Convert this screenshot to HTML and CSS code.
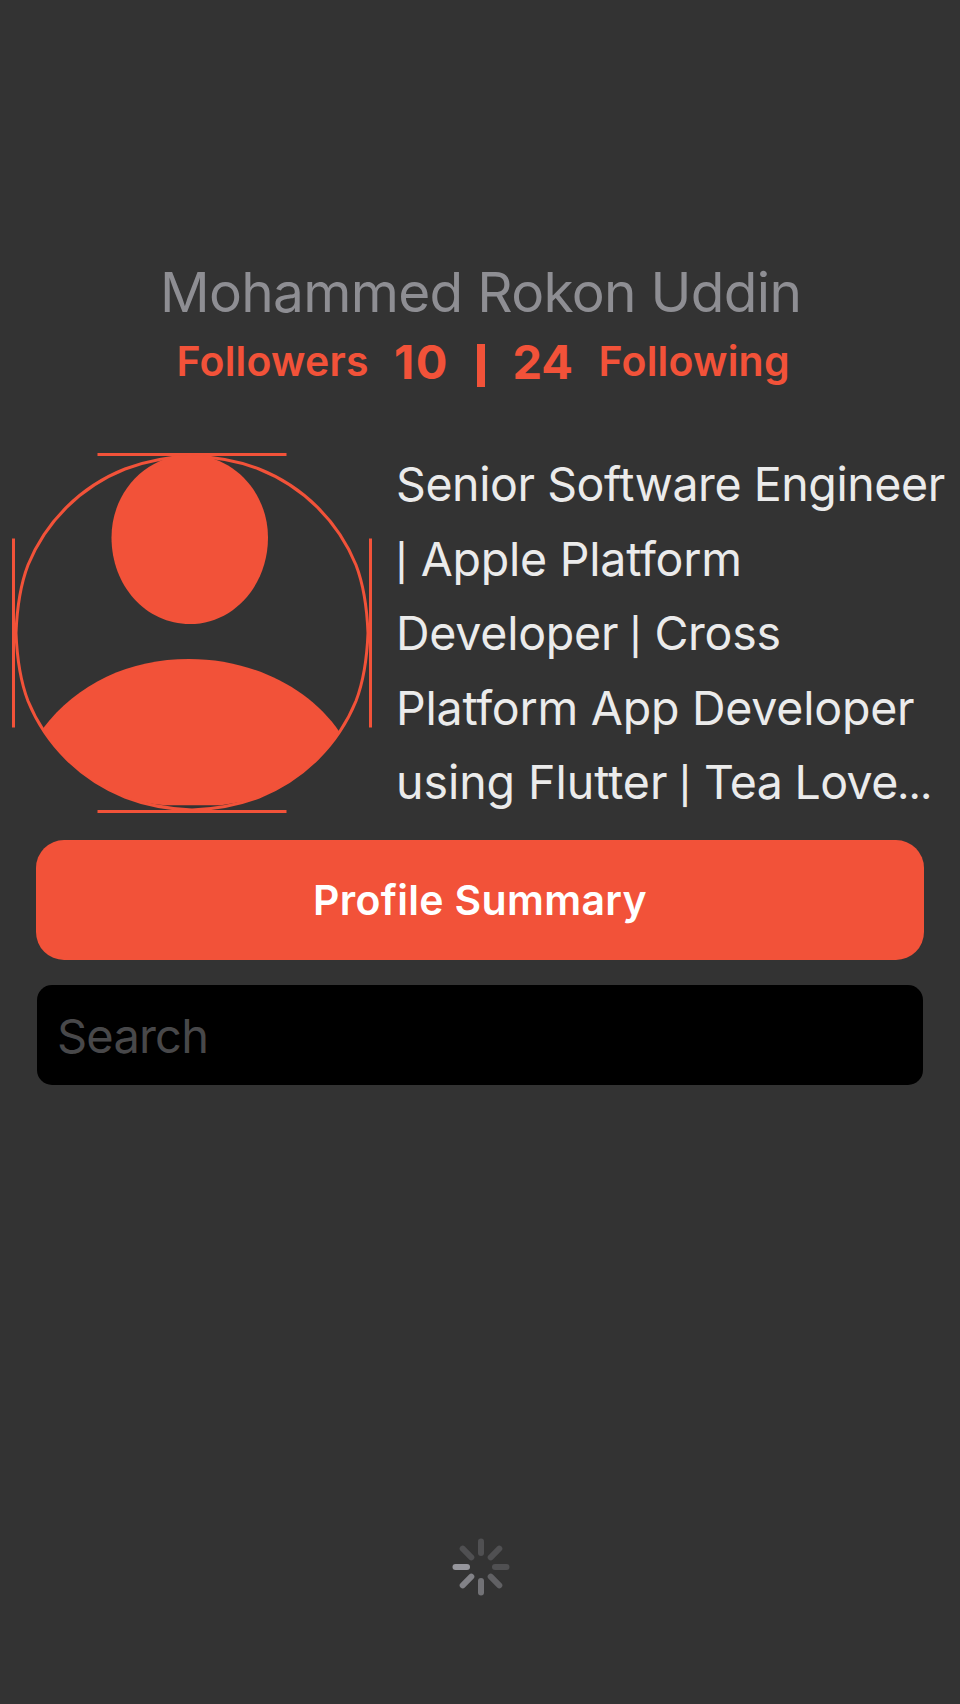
FILE: index.html
```html
<!DOCTYPE html>
<html lang="en">
<head>
<meta charset="utf-8">
<title>Profile</title>
<link rel="stylesheet" href="styles.css">
</head>
<body>
<main class="screen">
  <h1 class="name">Mohammed Rokon Uddin</h1>
  <div class="stats">
    <span class="label">Followers</span>
    <span class="count">10</span>
    <span class="divider"></span>
    <span class="count count-following">24</span>
    <span class="label label-following">Following</span>
  </div>
  <section class="about">
    <svg class="avatar" viewBox="12 453 360 360" role="img" aria-label="Avatar">
      <path class="bar" d="M97.5 454.5h189M97.5 811.5h189M13.5 538.5v189M370.5 538.5v189"/>
      <path class="ring" d="M16 633C17 608 21.5 582 28 565A174 174 0 0 1 125 469C143 462 166 457 192 456C218 457 241 462 259 469A174 174 0 0 1 356 565C362.500 582 367 608 368 633C367 658 362.500 684 356 701A174 174 0 0 1 259 797C241 804 218 809 192 810C166 809 143 804 125 797A174 174 0 0 1 28 701C21.500 684 17 658 16 633Z"/>
      <path class="shape" d="M111.500 537.500C111.500 492 146 455 189.800 455C233 455 268 492 268 537.500C268 586 233 624 189.800 624C146 624 111.500 586 111.500 537.500Z"/>
      <path class="shape" d="M42.500 729C77 683 130 659 189 659C250 659 308 686 339.500 732A176 176 0 0 1 259 797Q240 803 221 805.300H165Q142 803 125 797A176 176 0 0 1 42.500 729Z"/>
    </svg>
    <p class="bio"><span class="line line-tight">Senior Software Engineer</span>
      <span class="line"><span class="pipe">|</span> Apple Platform</span>
      <span class="line">Developer <span class="pipe pipe-close">|</span> Cross</span>
      <span class="line">Platform App Developer</span>
      <span class="line line-loose">using Flutter <span class="pipe pipe-close">|</span> <span class="tail">Tea Love<span class="ellipsis">…</span></span></span></p>
  </section>
  <button class="summary" type="button">Profile Summary</button>
  <input class="search" type="text" placeholder="Search">
  <svg class="spinner" viewBox="-30 -30 60 60" aria-label="Loading">
    <path stroke="#505052" d="M0-14V-25.500"/>
    <path stroke="#505052" d="M9.700-9.700L18.300-18.300"/>
    <path stroke="#505052" d="M14 0H25.500"/>
    <path stroke="#616164" d="M9.700 9.700L18.300 18.300"/>
    <path stroke="#727276" d="M0 14V25.500"/>
    <path stroke="#828287" d="M-9.700 9.700L-18.300 18.300"/>
    <path stroke="#96969c" d="M-14 0H-25.500"/>
    <path stroke="#505052" d="M-9.700-9.700L-18.300-18.300"/>
  </svg>
</main>
</body>
</html>
```
FILE: styles.css
```css
* { box-sizing: border-box; }
body {
  margin: 0;
  background: #333333;
  font-family: Inter, "Liberation Sans", sans-serif;
}
.screen {
  display: flex;
  flex-direction: column;
  height: 1704px;
  padding-top: 258px;
  overflow: hidden;
}
.name {
  margin: 0 0 0 160px;
  font-size: 55px;
  font-weight: 400;
  line-height: 68px;
  letter-spacing: -0.700px;
  white-space: nowrap;
  color: #8e8e93;
}
.stats {
  display: flex;
  align-items: flex-start;
  height: 60px;
  margin: 6px 0 61px 176.500px;
  white-space: nowrap;
  color: #f25239;
}
.label {
  width: 217.500px;
  font-size: 41px;
  font-weight: 600;
  line-height: 58px;
  letter-spacing: 0.200px;
}
.count {
  width: 82.500px;
  font-size: 47px;
  font-weight: 700;
  line-height: 60px;
  letter-spacing: 1.500px;
}
.divider {
  width: 8px;
  height: 43px;
  margin-top: 12px;
  background: #f25239;
}
.count-following { margin-left: 28px; width: 86px; letter-spacing: 0; }
.about {
  display: flex;
  gap: 24px;
  height: 360px;
  margin-left: 12px;
}
.avatar { flex: none; width: 360px; height: 360px; }
.bar, .ring { fill: none; stroke: #f25239; stroke-width: 3; }
.shape { fill: #f25239; }
.bio {
  margin: -6px 0 0;
  font-size: 46.500px;
  line-height: 74.500px;
  white-space: nowrap;
  color: #ebebeb;
}
.line { display: block; height: 74.500px; letter-spacing: -0.230px; }
.line-tight { letter-spacing: -0.420px; }
.line-loose { letter-spacing: -0.050px; }
.pipe {
  margin: 0 0.300px 0 -0.700px;
  font-size: 36px;
  font-weight: 500;
  line-height: 1;
}
.pipe-close { margin: 0 0 0 -1.800px; }
.tail { letter-spacing: -0.650px; }
.ellipsis { font-size: 36px; font-weight: 600; line-height: 1; }
.summary {
  height: 120px;
  margin: 27px 36px 25px;
  border: 0;
  border-radius: 28px;
  background: #f25239;
  color: #ffffff;
  font: 600 41px/50px Inter, "Liberation Sans", sans-serif;
  letter-spacing: 0.330px;
}
.search {
  height: 100px;
  margin: 0 37px;
  padding: 0 20px;
  border: 0;
  border-radius: 15px;
  outline: 0;
  background: #000000;
  font: 400 47px/56px Inter, "Liberation Sans", sans-serif;
  letter-spacing: -0.800px;
}
.search::placeholder { color: #48484a; opacity: 1; }
.spinner {
  width: 60px;
  height: 60px;
  margin: 452px 0 0 450.500px;
  fill: none;
  stroke-width: 6;
  stroke-linecap: round;
}
```
